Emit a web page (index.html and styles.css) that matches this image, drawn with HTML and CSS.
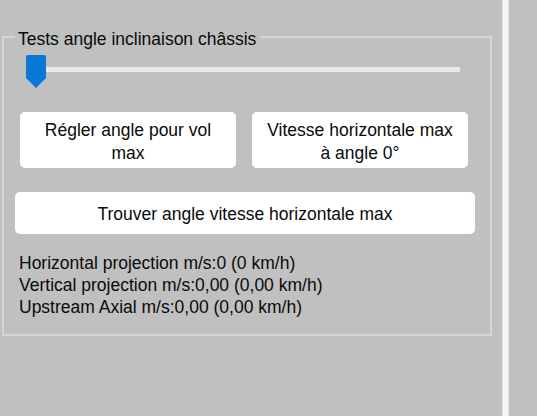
FILE: index.html
```html
<!DOCTYPE html>
<html lang="fr">
<head>
<meta charset="utf-8">
<title>Tests angle inclinaison châssis</title>
<link rel="stylesheet" href="styles.css">
</head>
<body>
<div class="window">
  <div class="panel">
    <fieldset class="group">
      <legend class="group-title">Tests angle inclinaison châssis</legend>
      <div class="slider">
        <div class="track"></div>
        <div class="ticks"></div>
        <svg class="thumb" width="20" height="33" viewBox="0 0 20 33"><path d="M1.5 0 H18.5 A1.5 1.5 0 0 1 20 1.5 V23 L10 33 L0 23 V1.5 A1.5 1.5 0 0 1 1.5 0 Z" fill="#0a78d8"/></svg>
      </div>
      <div class="btn-row">
        <button class="btn btn-half">Régler angle pour vol max</button>
        <button class="btn btn-half">Vitesse horizontale max à angle 0°</button>
      </div>
      <button class="btn btn-wide">Trouver angle vitesse horizontale max</button>
      <div class="readouts">
        <div>Horizontal projection m/s:0 (0 km/h)</div>
        <div>Vertical projection m/s:0,00 (0,00 km/h)</div>
        <div>Upstream Axial m/s:0,00 (0,00 km/h)</div>
      </div>
    </fieldset>
  </div>
  <div class="divider"></div>
  <div class="rest"></div>
</div>
</body>
</html>
```
FILE: styles.css
```css
html, body {
  margin: 0;
  padding: 0;
  background: #c0c0c0;
}
body {
  font-family: "Liberation Sans", Arial, sans-serif;
  font-size: 17.5px;
  color: #0a0a0a;
}
.window {
  display: flex;
  width: 537px;
  height: 416px;
  overflow: hidden;
}
.panel {
  width: 502px;
  flex: none;
}
.divider {
  width: 7px;
  flex: none;
  background: #f4f4f4;
  border-left: 1px solid #e4e4e4;
  border-right: 1px solid #e4e4e4;
  box-sizing: border-box;
}
.rest {
  flex: 1;
}
.group {
  margin: 24px 0 0 2px;
  padding: 0;
  width: 490px;
  height: 312px;
  box-sizing: border-box;
  border: 2px solid #d6d6d6;
  min-inline-size: 0;
}
.group-title {
  margin-left: 11px;
  padding: 4px 4px 0 3px;
  line-height: 22px;
}
.slider {
  display: flow-root;
  position: relative;
  margin: 5px 0 0 22px;
  width: 434px;
  height: 40px;
}
.track {
  margin: 12px 0 0 4px;
  height: 5px;
  background: #e9e9e9;
}
.ticks {
  margin: 21px 0 0 9px;
  width: 407px;
  height: 1px;
  background: repeating-linear-gradient(90deg, #cdcdcd 0 1px, transparent 1px 3px);
}
.thumb {
  position: absolute;
  left: 0;
  top: 0;
  display: block;
}
.btn {
  font: inherit;
  color: inherit;
  background: #ffffff;
  border: none;
  border-radius: 5px;
  padding: 0 12px;
  margin: 0;
  display: flex;
  align-items: center;
  justify-content: center;
  text-align: center;
  box-sizing: border-box;
}
.btn-row {
  display: flex;
  gap: 16px;
  margin: 17px 0 0 16px;
}
.btn-half {
  width: 216px;
  height: 56px;
  line-height: 23px;
  padding-top: 4px;
}
.btn-wide {
  width: 460px;
  height: 42px;
  margin: 24px 0 0 11px;
  line-height: 23px;
  padding-top: 2px;
}
.readouts {
  margin: 18px 0 0 15px;
  line-height: 22px;
}
```
